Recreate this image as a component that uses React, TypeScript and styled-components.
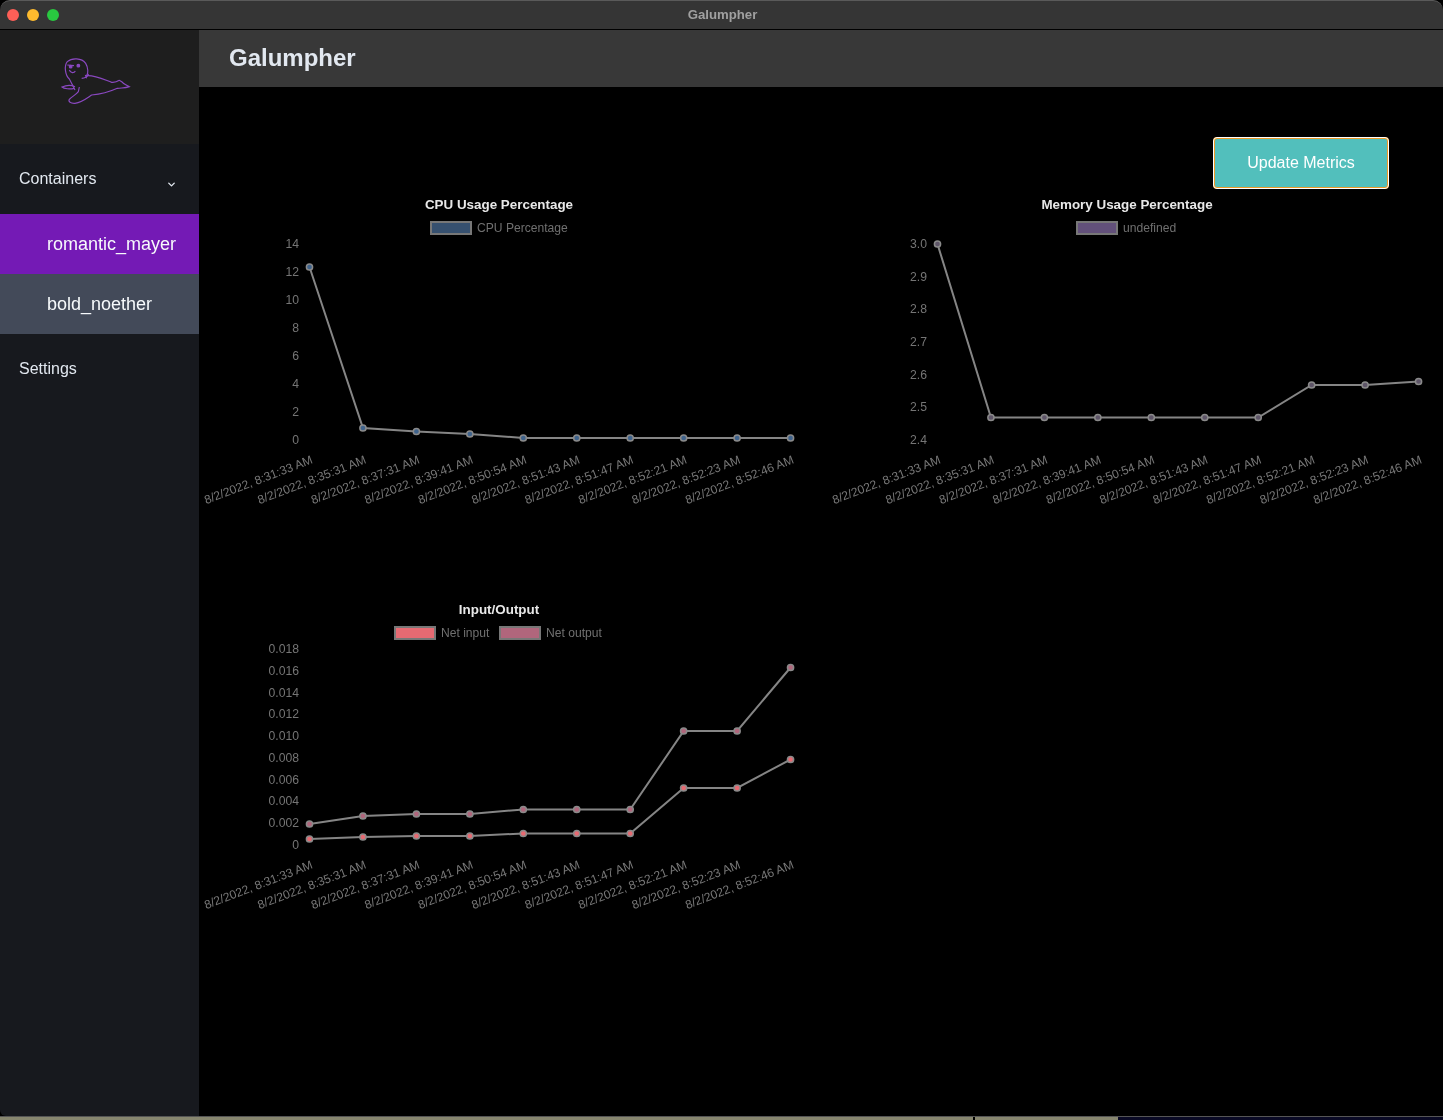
import { FC } from 'react';
import styled, { createGlobalStyle } from 'styled-components';
import { ChevronDown } from 'lucide-react';

const GlobalStyle = createGlobalStyle`
  html, body {
    margin: 0;
    padding: 0;
    background: #000;
    font-family: "Liberation Sans", Arial, sans-serif;
  }
`;

const LABELS = [
  '8/2/2022, 8:31:33 AM',
  '8/2/2022, 8:35:31 AM',
  '8/2/2022, 8:37:31 AM',
  '8/2/2022, 8:39:41 AM',
  '8/2/2022, 8:50:54 AM',
  '8/2/2022, 8:51:43 AM',
  '8/2/2022, 8:51:47 AM',
  '8/2/2022, 8:52:21 AM',
  '8/2/2022, 8:52:23 AM',
  '8/2/2022, 8:52:46 AM',
];

// chart coordinates, in px inside each chart's svg
const PLOT_LEFT = 105.5;
const PLOT_STEP = 53.45;
const PLOT_TOP = 49;
const PLOT_BOTTOM = 245;

const Window = styled.div`
  display: flex;
  flex-direction: column;
  width: 1443px;
  height: 1120px;
  overflow: hidden;
  will-change: transform; /* grey text smoothing, as in the capture */
`;

const TitleBar = styled.div`
  position: relative;
  display: flex;
  align-items: center;
  justify-content: center;
  flex: 0 0 30px;
  box-sizing: border-box;
  padding: 0 0 1px 2px;
  border-top: 1px solid #5a5a5a;
  border-bottom: 1px solid #000;
  border-radius: 10px 10px 0 0;
  background: #353535;
  color: #a0a0a0;
  font-size: 13.2px;
  font-weight: 700;
`;

const Lights = styled.div`
  position: absolute;
  left: 7px;
  top: 8px;
  display: flex;
  gap: 8px;
`;

const Light = styled.span<{ $color: string }>`
  width: 12px;
  height: 12px;
  border-radius: 50%;
  background: ${(props) => props.$color};
`;

const Body = styled.div`
  display: flex;
  flex: 1;
  min-height: 0;
`;

const Sidebar = styled.aside`
  flex: 0 0 199px;
  display: flex;
  flex-direction: column;
  border-bottom-left-radius: 6px;
  background: #17191e;
`;

const LogoBox = styled.div`
  flex: 0 0 114px;
  box-sizing: border-box;
  padding: 15px 0 0 40px;
  background: #1e1e1e;
`;

const NavRow = styled.div`
  display: flex;
  align-items: center;
  justify-content: space-between;
  height: 70px;
  padding: 0 22px 0 19px;
  color: #e2e8f0;
  font-size: 16px;
`;

const ChevronSlot = styled.span`
  display: flex;
  margin-top: 10px;
`;

const ContainerRow = styled.div<{ $active?: boolean }>`
  display: flex;
  align-items: center;
  height: 60px;
  padding-left: 47px;
  background: ${(props) => (props.$active ? '#741ab5' : '#434a59')};
  color: #f7fafc;
  font-size: 18px;
`;

const Content = styled.main`
  flex: 1;
  display: flex;
  flex-direction: column;
  min-width: 0;
  background: #000;
`;

const Header = styled.header`
  display: flex;
  align-items: center;
  flex: 0 0 55px;
  padding: 0 0 2px 30px;
  background: #383838;
`;

const Heading = styled.h1`
  margin: 0;
  color: #e2e8f0;
  font-size: 24px;
  font-weight: 700;
`;

const Toolbar = styled.div`
  display: flex;
  justify-content: flex-end;
  padding: 50px 54px 6px 0;
`;

const UpdateButton = styled.button`
  width: 176px;
  height: 52px;
  box-sizing: border-box;
  border: 2px solid #ec9a29;
  border-radius: 4px;
  outline: 1px solid #fff;
  outline-offset: -1px;
  background: #52bfbc;
  color: #fff;
  font-family: inherit;
  font-size: 16px;
`;

const ChartGrid = styled.div`
  display: grid;
  grid-template-columns: 604px 604px;
  grid-auto-rows: 330px;
  gap: 75px 24px;
  padding-left: 1px;
`;

const ChartTitle = styled.text`
  fill: #e8e8e8;
  font-size: 13.4px;
  font-weight: 700;
  text-anchor: middle;
`;

const LegendText = styled.text`
  fill: #707070;
  font-size: 12.1px;
`;

const TickText = styled.text`
  fill: #757575;
  font-size: 12.2px;
  text-anchor: end;
`;

const AxisLabel = styled.text`
  fill: #787878;
  font-size: 12.1px;
  text-anchor: end;
`;

const BottomStrip = styled.div`
  display: flex;
  flex: 0 0 3px;
  border-top: 1px solid #555;
  box-sizing: content-box;
  background: #000;
`;

const StripPart = styled.div<{ $color: string; $width?: number }>`
  flex: ${(props) => (props.$width ? `0 0 ${props.$width}px` : 1)};
  background: ${(props) => props.$color};
`;

interface LegendEntry {
  label: string;
  boxX: number;
  fill: string;
}

interface Series {
  fill: string;
  points: number[]; // px from the top of the chart
}

interface ChartProps {
  title: string;
  ticks: string[];
  legend: LegendEntry[];
  series: Series[];
}

const LineChart: FC<ChartProps> = ({ title, ticks, legend, series }) => (
  <svg width={604} height={330} viewBox="-4 0 604 330">
    <ChartTitle x={295} y={13.5}>
      {title}
    </ChartTitle>

    {legend.map((entry) => (
      <g key={entry.label}>
        <rect
          x={entry.boxX}
          y={27}
          width={40}
          height={12}
          fill={entry.fill}
          stroke="#777"
          strokeWidth={2}
        />
        <LegendText x={entry.boxX + 46} y={37}>
          {entry.label}
        </LegendText>
      </g>
    ))}

    {ticks.map((tick, i) => (
      <TickText
        key={tick}
        x={95}
        y={PLOT_TOP + 4 + ((PLOT_BOTTOM - PLOT_TOP) * i) / (ticks.length - 1)}
      >
        {tick}
      </TickText>
    ))}

    {LABELS.map((label, i) => {
      const x = PLOT_LEFT + PLOT_STEP * i + 4;
      return (
        <AxisLabel key={label} x={x} y={268} transform={`rotate(-21 ${x} 268)`}>
          {label}
        </AxisLabel>
      );
    })}

    {series.map((line) => (
      <g key={line.fill}>
        <polyline
          points={line.points
            .map((y, i) => `${PLOT_LEFT + PLOT_STEP * i},${y}`)
            .join(' ')}
          fill="none"
          stroke="#858585"
          strokeWidth={2}
        />
        {line.points.map((y, i) => (
          <circle
            key={i}
            cx={PLOT_LEFT + PLOT_STEP * i}
            cy={y}
            r={3.1}
            fill={line.fill}
            stroke="#8a8a8a"
            strokeWidth={1.5}
          />
        ))}
      </g>
    ))}
  </svg>
);

const SealLogo: FC = () => (
  <svg width={100} height={70} viewBox="0 0 300 210" fill="none" stroke="#8a48c0" strokeWidth={3.5}>
    <path d="M105 135C100 125 95 115 88 102C75 90 72 62 82 50C95 38 125 38 137 55C145 68 145 85 140 92C165 90 195 105 215 112C225 113 232 110 238 106L245 110C250 118 262 122 268 125C255 130 245 128 232 130C210 140 180 148 155 150C140 160 125 172 105 175C92 176 84 170 88 163C95 155 110 148 115 140L118 126" />
    <path d="M105 125C90 118 75 122 66 126C72 132 90 133 103 130" />
    <path d="M125 100C135 100 141 97 146 88M136 90L140 100M88 75C92 85 102 85 106 78" />
    <path d="M82 60L102 62" />
    <circle cx={92} cy={65} r={4} fill="#8a48c0" />
    <circle cx={115} cy={62} r={4} fill="#8a48c0" />
  </svg>
);

const App: FC = () => (
  <Window>
    <GlobalStyle />
    <TitleBar>
      <Lights>
        <Light $color="#fd5f57" />
        <Light $color="#febb2e" />
        <Light $color="#29c840" />
      </Lights>
      Galumpher
    </TitleBar>

    <Body>
      <Sidebar>
        <LogoBox>
          <SealLogo />
        </LogoBox>
        <NavRow>
          Containers
          <ChevronSlot>
            <ChevronDown size={11} strokeWidth={3} />
          </ChevronSlot>
        </NavRow>
        <ContainerRow $active>romantic_mayer</ContainerRow>
        <ContainerRow>bold_noether</ContainerRow>
        <NavRow>Settings</NavRow>
      </Sidebar>

      <Content>
        <Header>
          <Heading>Galumpher</Heading>
        </Header>
        <Toolbar>
          <UpdateButton>Update Metrics</UpdateButton>
        </Toolbar>
        <ChartGrid>
          <LineChart
            title="CPU Usage Percentage"
            ticks={['14', '12', '10', '8', '6', '4', '2', '0']}
            legend={[{ label: 'CPU Percentage', boxX: 227, fill: '#36506f' }]}
            series={[
              {
                fill: '#3f638c',
                points: [72, 233, 236.5, 239, 243, 243, 243, 243, 243, 243],
              },
            ]}
          />
          <LineChart
            title="Memory Usage Percentage"
            ticks={['3.0', '2.9', '2.8', '2.7', '2.6', '2.5', '2.4']}
            legend={[{ label: 'undefined', boxX: 245, fill: '#62507a' }]}
            series={[
              {
                fill: '#5e5568',
                points: [49, 222.5, 222.5, 222.5, 222.5, 222.5, 222.5, 190, 190, 186.5],
              },
            ]}
          />
          <LineChart
            title="Input/Output"
            ticks={[
              '0.018',
              '0.016',
              '0.014',
              '0.012',
              '0.010',
              '0.008',
              '0.006',
              '0.004',
              '0.002',
              '0',
            ]}
            legend={[
              { label: 'Net input', boxX: 191, fill: '#e66a72' },
              { label: 'Net output', boxX: 296, fill: '#b0667c' },
            ]}
            series={[
              {
                fill: '#e66a72',
                points: [239, 237, 236, 236, 233.5, 233.5, 233.5, 188, 188, 159.5],
              },
              {
                fill: '#b0667c',
                points: [224, 216, 214, 214, 209.5, 209.5, 209.5, 131, 131, 67.5],
              },
            ]}
          />
        </ChartGrid>
      </Content>
    </Body>

    <BottomStrip>
      <StripPart $color="#87866f" $width={973} />
      <StripPart $color="#000" $width={2} />
      <StripPart $color="#87866f" $width={143} />
      <StripPart $color="#0a0a25" />
    </BottomStrip>
  </Window>
);

export default App;
